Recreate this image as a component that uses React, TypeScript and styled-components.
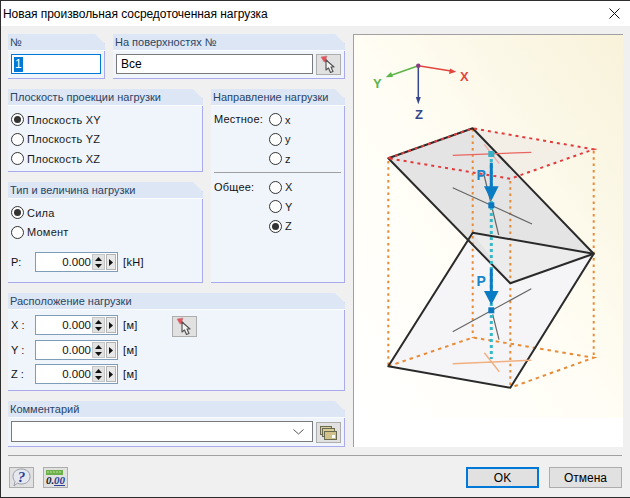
import React from "react";
import styled, { createGlobalStyle } from "styled-components";

const Global = createGlobalStyle`
  html, body { margin: 0; padding: 0; background: #f0f0f0; }
  * { box-sizing: border-box; }
`;

const Win = styled.div`
  width: 630px; height: 498px; background: #f0f0f0; display: flex; flex-direction: column;
  border-left: 1px solid #2e2e2e; border-bottom: 1px solid #2a2a2a; border-top: 1px solid #2e2e2e;
  font-family: "Liberation Sans", Arial, sans-serif; font-size: 11px; color: #111; overflow: hidden;
`;
const TitleBar = styled.div`
  height: 25px; flex: none; background: #fff; display: flex; align-items: center; justify-content: space-between;
  padding: 0 10px 0 2px; font-size: 12px; color: #000; letter-spacing: -0.05px;
`;
const Content = styled.div`
  flex: 1; display: grid; grid-template-columns: 337px 270px; column-gap: 8px; padding: 8px 0 0 7px; height: 413px;
`;
const LeftCol = styled.div`
  display: flex; flex-direction: column; gap: 10px; height: 413px;
`;
const TopRow = styled.div`
  display: grid; grid-template-columns: 97px 232px; column-gap: 8px;
`;
const MidRow = styled.div`
  display: grid; grid-template-columns: 195px 134px; column-gap: 8px;
`;
const Stack = styled.div`
  display: flex; flex-direction: column; gap: 10px;
`;
const Group = styled.section<{ $h: number }>`
  height: ${p => p.$h}px; background: #f0f4fb; border-right: 1px solid #aaaaee; border-bottom: 1px solid #aaaaee;
  clip-path: polygon(0 0, calc(100% - 10px) 0, 100% 10px, 100% 100%, 0 100%);
  display: flex; flex-direction: column;
`;
const GroupHead = styled.div`
  height: 17px; flex: none; background: #dce6f4; border-bottom: 1px solid #fbfcfe; color: #2a4464; padding: 1px 0 0 2px; line-height: 14px;
  margin-right: -1px;
`;
const GroupBody = styled.div<{ $top?: number }>`
  flex: 1; padding: ${p => p.$top ?? 4}px 3px 0 3px; position: relative;
`;
const InlineRow = styled.div`
  display: flex; align-items: flex-start; gap: 3px;
`;
const TextField = styled.div<{ $focus?: boolean; $w: number; $h?: number }>`
  width: ${p => p.$w}px; height: ${p => p.$h ?? 20}px; background: #fff; border: 1px solid ${p => (p.$focus ? "#0078d7" : "#7a7a7a")};
  display: flex; align-items: center; padding-left: ${p => (p.$focus ? 2 : 4)}px; font-size: 12px; color: #000;
`;
const Sel = styled.span`
  background: #0078d7; color: #fff; padding: 0 1px; line-height: 15px;
`;
const Chevron = styled.span`
  margin-left: auto; margin-right: 8px; display: flex;
`;
const IconBtn = styled.button<{ $mt?: number }>`
  width: 25px; height: 21px; padding: 0; margin-top: ${p => p.$mt ?? 0}px; background: #e1e1e1; border: 1px solid #adadad; display: flex; align-items: center; justify-content: center; flex: none;
`;
const RadioList = styled.div`
  display: flex; flex-direction: column;
`;
const RadioRow = styled.div`
  height: 19.5px; display: flex; align-items: center; gap: 3px; white-space: nowrap; color: #1a1a1a; letter-spacing: 0.02em;
`;
const RadioDot = styled.span<{ $on?: boolean }>`
  width: 13px; height: 13px; flex: none; border-radius: 50%; border: 1px solid #333; background: #fff; position: relative;
  &::after {
    content: ""; display: ${p => (p.$on ? "block" : "none")}; position: absolute; left: 2px; top: 2px; width: 7px; height: 7px; border-radius: 50%; background: #333;
  }
`;
const DirGrid = styled.div`
  display: grid; grid-template-columns: 55px 1fr;
`;
const DirLabel = styled.div`
  padding-top: 2px; line-height: 14px; letter-spacing: 0.02em;
`;
const Divider = styled.div`
  height: 1px; background: #a0a0a0; margin: 3px 0 5px 0; width: 127px;
`;
const SpinRow = styled.div<{ $mt?: number }>`
  height: 24px; margin-top: ${p => p.$mt ?? 0}px; display: flex; align-items: center;
`;
const SpinLabel = styled.span`
  width: 24px; flex: none;
`;
const SpinBox = styled.div`
  width: 83px; height: 20px; border: 1px solid #7f9db9; background: #fff; display: flex; align-items: center; padding: 1px; flex: none;
`;
const SpinValue = styled.span`
  flex: 1; text-align: right; padding-right: 1px; color: #111; font-size: 11.5px;
`;
const SpinArrows = styled.span`
  width: 13px; height: 16px; background: #e1e1e1; border: 1px solid #c6c6c6; display: flex; flex-direction: column; align-items: center; justify-content: space-around; flex: none;
`;
const SpinNext = styled.span`
  width: 10px; height: 16px; margin-left: 1px; background: #e8e8e8; border: 1px solid #b4b4b4; display: flex; align-items: center; justify-content: center; flex: none;
`;
const Unit = styled.span`
  margin-left: 5px; letter-spacing: 0.03em;
`;
const PickOver = styled.div`
  position: absolute; left: 164px; top: 6px;
`;
const Art = styled.div`
  height: 413px; width: 270px; background: #fff; border-top: 1px solid #a0a0a0; border-left: 1px solid #a0a0a0; overflow: hidden;
`;
const ArtSvg = styled.svg`
  display: block;
`;
const Footer = styled.footer`
  flex: none; margin: 8px 8px 0 7px; border-top: 1px solid #a0a0a0; height: 42px; display: flex; align-items: flex-start; padding-top: 11px;
`;
const ToolBtn = styled(IconBtn)`
  margin-left: 1px; margin-right: 8px;
`;
const Spacer = styled.div`
  flex: 1;
`;
const DlgBtn = styled.button<{ $primary?: boolean }>`
  width: 73px; height: 21px; margin-left: ${p => (p.$primary ? 0 : 10)}px; padding: 0;
  background: #e1e1e1; color: #000; font: 12px "Liberation Sans", Arial, sans-serif;
  border: ${p => (p.$primary ? "2px solid #0078d7" : "1px solid #adadad")};
`;

const Pick = () => (
  <svg width="19" height="19" viewBox="0 0 19 19">
    <path d="M2 2 L8 1 L7 4 L9 6 L5 7 L2 2Z" fill="#e8505a" stroke="#c08084" strokeWidth="0.6" />
    <path d="M7 5 L7 15 L9.5 13 L11.5 17.5 L14 16.5 L12 12 L15 12 Z" fill="#f4f4f4" stroke="#555" strokeWidth="1.2" strokeLinejoin="round" />
  </svg>
);

const Spin = () => (
  <SpinBox>
    <SpinValue>0.000</SpinValue>
    <SpinArrows>
      <svg width="7" height="4" viewBox="0 0 7 4"><path d="M3.5 0 L7 4 H0Z" fill="#111" /></svg>
      <svg width="7" height="4" viewBox="0 0 7 4"><path d="M0 0 H7 L3.5 4Z" fill="#111" /></svg>
    </SpinArrows>
    <SpinNext>
      <svg width="4" height="7" viewBox="0 0 4 7"><path d="M0 0 L4 3.5 L0 7Z" fill="#111" /></svg>
    </SpinNext>
  </SpinBox>
);

const Radio = ({ label, on }: { label: string; on?: boolean }) => (
  <RadioRow>
    <RadioDot $on={on} />
    {label}
  </RadioRow>
);

const Illustration = () => (
  <ArtSvg width="270" height="413" viewBox="353 34 270 413">
    <defs>
      <linearGradient id="bg" x1="0" y1="1" x2="1" y2="0">
        <stop offset="0" stopColor="#ffffff" />
        <stop offset="0.5" stopColor="#fffdf4" />
        <stop offset="1" stopColor="#f8f2da" />
      </linearGradient>
    </defs>
    <rect x="353" y="34" width="270" height="383" fill="url(#bg)" />
    <path d="M472 127 L593 149 L509 178 L387 157Z" fill="#f3efe6" />
    <g stroke="#ea8a35" strokeWidth="2" strokeDasharray="2.5 3.8" fill="none">
      <path d="M387.3 160V365M592.7 150V357M509.3 180V386" />
    </g>
    <path d="M387.3 365.3 L471.7 231.7 L592.7 252.7 L509.3 386.7Z" fill="#f5f5f7" />
    <path d="M387.3 157.3 L471.7 127.3 L592.7 252.7 L509.3 282.3Z" fill="#e4e4e5" />
    <path d="M471.7 231.7 L592.7 252.7 L509.3 282.3Z" fill="#ececed" />
    <g stroke="#ea8a35" strokeWidth="2" strokeDasharray="2.5 3.8" fill="none">
      <path d="M471.7 128V337M509.3 180V386" />
    </g>
    <g stroke="#ea8a35" strokeWidth="2" strokeDasharray="3.5 4" fill="none">
      <path d="M387.3 365.3 L472 336.5 L592.7 356.7 L509.3 386.7" />
    </g>
    <g stroke="#2a2a2a" strokeWidth="2" fill="none" strokeLinejoin="round">
      <path d="M387.3 157.3 L471.7 127.3 L592.7 252.7 L509.3 282.3Z" />
      <path d="M471.7 231.7 L592.7 252.7 L509.3 386.7 L387.3 365.3Z" />
    </g>
    <g stroke="#e33b3b" strokeWidth="2" strokeDasharray="3 4" fill="none">
      <path d="M387.3 157.3 L471.7 127.3 L592.7 148.3 L509.3 177.7 L387.3 157.3" />
    </g>
    <path d="M451.7 154.3 L530.3 151.3" stroke="#e8665f" strokeWidth="1.2" />
    <path d="M483.3 143.3 L498.3 162.7" stroke="#f0a8a0" strokeWidth="1.2" />
    <path d="M451.7 186.7 L531 223M483.3 175 L497.7 234M451.7 330.7 L530.3 287.7M491.7 313.3 L498 338.7" stroke="#666" strokeWidth="1.2" />
    <path d="M451.7 362.7 L530.3 359.3M483.3 351.7 L498.3 370.7" stroke="#f0b080" strokeWidth="1.4" />
    <path d="M490.3 158 V358" stroke="#35b8c8" strokeWidth="3" strokeDasharray="3 3" />
    <rect x="487.3" y="150" width="6" height="6" fill="#35b0c4" />
    <rect x="487.3" y="201.3" width="6" height="6" fill="#0a78c0" />
    <rect x="487.3" y="306.3" width="6" height="6" fill="#0a78c0" />
    <path d="M490.3 161.7 V187" stroke="#0a7cc4" strokeWidth="3" />
    <path d="M483 185.3 H497.6 L490.3 200Z" fill="#0a7cc4" />
    <path d="M490.3 267.7 V291" stroke="#0a7cc4" strokeWidth="3" />
    <path d="M483 290 H497.6 L490.3 304Z" fill="#0a7cc4" />
    <text x="475.5" y="179" fontFamily="Liberation Sans" fontWeight="700" fontSize="14" fill="#1a84c8">P</text>
    <text x="475.5" y="285" fontFamily="Liberation Sans" fontWeight="700" fontSize="14" fill="#1a84c8">P</text>
    <path d="M417.3 64.7 L450 70" stroke="#e2463f" strokeWidth="1.5" />
    <path d="M455.3 70.7 L448 73 L449 67.5Z" fill="#e2463f" />
    <path d="M417.3 64.7 L391 74" stroke="#5db54a" strokeWidth="1.5" />
    <path d="M384.7 76.3 L390 71 L392 76Z" fill="#5db54a" />
    <path d="M417.3 64.7 V98" stroke="#35468e" strokeWidth="1.5" />
    <path d="M417.3 103.3 L414.8 96 H419.8Z" fill="#35468e" />
    <circle cx="417.3" cy="64.7" r="2.2" fill="#8a3a88" />
    <text x="459" y="79.5" fontFamily="Liberation Sans" fontWeight="700" fontSize="13" fill="#e2463f">X</text>
    <text x="372" y="86.5" fontFamily="Liberation Sans" fontWeight="700" fontSize="13" fill="#5db54a">Y</text>
    <text x="414" y="117.5" fontFamily="Liberation Sans" fontWeight="700" fontSize="13" fill="#35468e">Z</text>
  </ArtSvg>
);

export default function App() {
  return (
    <Win>
      <Global />
      <TitleBar>
        <span>Новая произвольная сосредоточенная нагрузка</span>
        <svg width="11" height="11" viewBox="0 0 11 11"><path d="M0.5 0.5 L10.5 10.5M10.5 0.5 L0.5 10.5" stroke="#111" strokeWidth="1" /></svg>
      </TitleBar>
      <Content>
        <LeftCol>
          <TopRow>
            <Group $h={45}>
              <GroupHead>№</GroupHead>
              <GroupBody $top={3}><TextField $focus $w={90}><Sel>1</Sel></TextField></GroupBody>
            </Group>
            <Group $h={45}>
              <GroupHead>На поверхностях №</GroupHead>
              <GroupBody $top={3}>
                <InlineRow>
                  <TextField $w={197}>Все</TextField>
                  <IconBtn><Pick /></IconBtn>
                </InlineRow>
              </GroupBody>
            </Group>
          </TopRow>
          <MidRow>
            <Stack>
              <Group $h={83}>
                <GroupHead>Плоскость проекции нагрузки</GroupHead>
                <GroupBody>
                  <RadioList>
                    <Radio label="Плоскость XY" on />
                    <Radio label="Плоскость YZ" />
                    <Radio label="Плоскость XZ" />
                  </RadioList>
                </GroupBody>
              </Group>
              <Group $h={101}>
                <GroupHead>Тип и величина нагрузки</GroupHead>
                <GroupBody>
                  <RadioList>
                    <Radio label="Сила" on />
                    <Radio label="Момент" />
                  </RadioList>
                  <SpinRow $mt={8}>
                    <SpinLabel>P:</SpinLabel>
                    <Spin />
                    <Unit>[kH]</Unit>
                  </SpinRow>
                </GroupBody>
              </Group>
            </Stack>
            <Group $h={194}>
              <GroupHead>Направление нагрузки</GroupHead>
              <GroupBody>
                <DirGrid>
                  <DirLabel>Местное:</DirLabel>
                  <RadioList>
                    <Radio label="x" />
                    <Radio label="y" />
                    <Radio label="z" />
                  </RadioList>
                </DirGrid>
                <Divider />
                <DirGrid>
                  <DirLabel>Общее:</DirLabel>
                  <RadioList>
                    <Radio label="X" />
                    <Radio label="Y" />
                    <Radio label="Z" on />
                  </RadioList>
                </DirGrid>
              </GroupBody>
            </Group>
          </MidRow>
          <Group $h={98}>
            <GroupHead>Расположение нагрузки</GroupHead>
            <GroupBody $top={3}>
              <SpinRow><SpinLabel>X :</SpinLabel><Spin /><Unit>[м]</Unit></SpinRow>
              <SpinRow $mt={1}><SpinLabel>Y :</SpinLabel><Spin /><Unit>[м]</Unit></SpinRow>
              <SpinRow><SpinLabel>Z :</SpinLabel><Spin /><Unit>[м]</Unit></SpinRow>
              <PickOver><IconBtn><Pick /></IconBtn></PickOver>
            </GroupBody>
          </Group>
          <Group $h={46}>
            <GroupHead>Комментарий</GroupHead>
            <GroupBody $top={3}>
              <InlineRow>
                <TextField $w={302} $h={21}>
                  <Chevron>
                    <svg width="11" height="6" viewBox="0 0 11 6"><path d="M0.5 0.5 L5.5 5 L10.5 0.5" fill="none" stroke="#555" strokeWidth="1" /></svg>
                  </Chevron>
                </TextField>
                <IconBtn $mt={1}>
                  <svg width="18" height="16" viewBox="0 0 18 16">
                    <rect x="0.5" y="1.5" width="11" height="8" fill="#d8d0a0" stroke="#6a6a50" />
                    <rect x="2.5" y="3.5" width="12" height="8" fill="#d8cc98" stroke="#6a6a50" />
                    <rect x="4.5" y="6.5" width="12" height="8" fill="#cfc28a" stroke="#6a6a50" />
                    <rect x="12" y="10" width="3" height="3" fill="#fff" />
                  </svg>
                </IconBtn>
              </InlineRow>
            </GroupBody>
          </Group>
        </LeftCol>
        <Art><Illustration /></Art>
      </Content>
      <Footer>
        <ToolBtn>
          <svg width="21" height="19" viewBox="0 0 21 19">
            <path d="M10.5 1 C15.5 1 19 4.2 19 8.5 C19 12.8 15.5 16 10.5 16 C9 16 7.6 15.7 6.4 15.2 L3 18 L4 13.5 C2.7 12.1 2 10.4 2 8.5 C2 4.2 5.5 1 10.5 1Z" fill="#e6e8f0" stroke="#9a9eaa" />
            <text x="10.5" y="14" textAnchor="middle" fontFamily="Liberation Serif" fontWeight="700" fontStyle="italic" fontSize="15" fill="#2b3f96">?</text>
          </svg>
        </ToolBtn>
        <ToolBtn>
          <svg width="21" height="18" viewBox="0 0 21 18">
            <rect x="1" y="1" width="17" height="5" fill="#6cb04a" />
            <path d="M3 2V4M6 2V4M9 2V4M12 2V4M15 2V4" stroke="#bfe0a8" strokeWidth="1" />
            <text x="1" y="15" fontFamily="Liberation Serif" fontStyle="italic" fontWeight="700" fontSize="11" fill="#222">0.</text>
            <text x="9" y="15" fontFamily="Liberation Serif" fontStyle="italic" fontWeight="700" fontSize="11" fill="#2b3f96">00</text>
            <path d="M9 16.5H20" stroke="#2b3f96" strokeWidth="1" />
          </svg>
        </ToolBtn>
        <Spacer />
        <DlgBtn $primary>OK</DlgBtn>
        <DlgBtn>Отмена</DlgBtn>
      </Footer>
    </Win>
  );
}
